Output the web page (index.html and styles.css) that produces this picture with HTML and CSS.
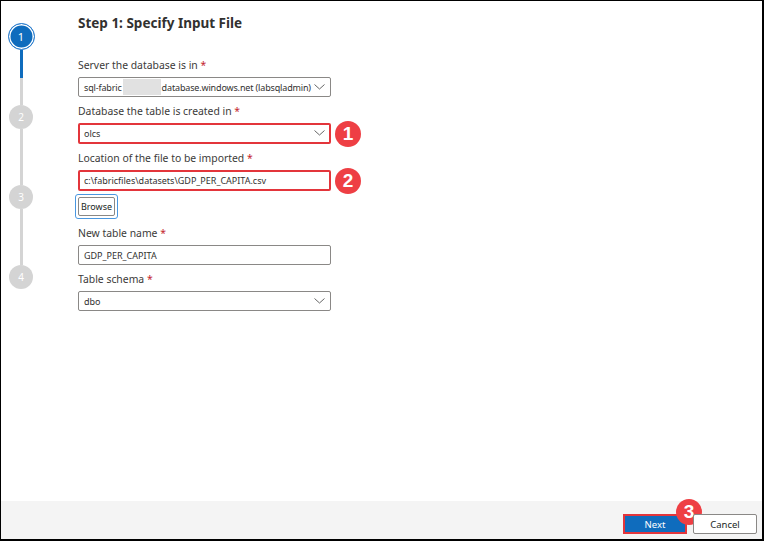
FILE: index.html
```html
<!DOCTYPE html>
<html>
<head>
<meta charset="utf-8">
<link rel="stylesheet" href="styles.css">
</head>
<body>
<div class="frame">
  <div class="main">
    <div class="stepper">
      <div class="step active">1</div>
      <div class="line first"></div>
      <div class="step">2</div>
      <div class="line"></div>
      <div class="step">3</div>
      <div class="line"></div>
      <div class="step">4</div>
    </div>
    <div class="content">
      <h1 class="title">Step 1: Specify Input File</h1>
      <div class="form">
        <div class="field">
          <label class="label">Server the database is in <span class="req">*</span></label>
          <div class="control select">
            <span class="val tight">sql-fabric<span class="redact"></span>database.windows.net (labsqladmin)</span>
            <svg class="chev" width="11" height="6" viewBox="0 0 11 6"><path d="M0.5 0.5 L5.5 5 L10.5 0.5" fill="none" stroke="#666" stroke-width="1"/></svg>
          </div>
        </div>
        <div class="field">
          <label class="label">Database the table is created in <span class="req">*</span></label>
          <div class="control select hl">
            <span class="val">olcs</span>
            <svg class="chev" width="11" height="6" viewBox="0 0 11 6"><path d="M0.5 0.5 L5.5 5 L10.5 0.5" fill="none" stroke="#666" stroke-width="1"/></svg>
            <span class="badge">1</span>
          </div>
        </div>
        <div class="field">
          <label class="label">Location of the file to be imported <span class="req">*</span></label>
          <div class="control hl">
            <span class="val">c:\fabricfiles\datasets\GDP_PER_CAPITA.csv</span>
            <span class="badge">2</span>
          </div>
          <div class="browse-wrap"><button class="browse">Browse</button></div>
        </div>
        <div class="field">
          <label class="label">New table name <span class="req">*</span></label>
          <div class="control">
            <span class="val">GDP_PER_CAPITA</span>
          </div>
        </div>
        <div class="field">
          <label class="label">Table schema <span class="req">*</span></label>
          <div class="control select">
            <span class="val">dbo</span>
            <svg class="chev" width="11" height="6" viewBox="0 0 11 6"><path d="M0.5 0.5 L5.5 5 L10.5 0.5" fill="none" stroke="#666" stroke-width="1"/></svg>
          </div>
        </div>
      </div>
    </div>
  </div>
  <div class="footer">
    <button class="btn primary">Next<span class="badge b3">3</span></button>
    <button class="btn">Cancel</button>
  </div>
</div>
</body>
</html>
```
FILE: styles.css
```css
* { box-sizing: border-box; }
html, body { margin: 0; padding: 0; background: #fff; }
body { font-family: "Noto Sans", "Open Sans", sans-serif; color: #323130; }

.frame {
  width: 764px;
  height: 541px;
  border-left: 1px solid #000;
  border-top: 1px solid #000;
  border-right: 2px solid #000;
  border-bottom: 2px solid #000;
  display: flex;
  flex-direction: column;
}

.main { flex: 1; display: flex; }

.stepper {
  width: 40px;
  padding-top: 22px;
  display: flex;
  flex-direction: column;
  align-items: center;
}
.step {
  width: 24px;
  height: 24px;
  border-radius: 50%;
  background: #d4d4d4;
  color: #fff;
  font-size: 10px;
  display: flex;
  align-items: center;
  justify-content: center;
  flex: none;
}
.step.active {
  width: 27px;
  height: 27px;
  background: #0f6cbd;
  border: 1.5px solid #2d7fd0;
  box-shadow: inset 0 0 0 1.5px #fff;
  font-size: 11px;
}
.line {
  width: 3px;
  height: 56px;
  background: #d4d4d4;
  flex: none;
}
.line.first {
  height: 55px;
  background: linear-gradient(#0f6cbd 0, #0f6cbd 28px, #d4d4d4 28px);
}

.content { padding-left: 37px; padding-top: 12px; }
.title {
  margin: 0;
  font-size: 13.5px;
  line-height: 20px;
  font-weight: 700;
  color: #323130;
}
.form { margin-top: 24px; display: flex; flex-direction: column; gap: 6px; }
.field { display: flex; flex-direction: column; width: 253px; }
.label {
  font-size: 10.4px;
  line-height: 16px;
  height: 16px;
  color: #3b3a39;
  margin-bottom: 4px;
}
.req { color: #c4262e; }

.control {
  position: relative;
  height: 20px;
  border: 1px solid #8a8886;
  border-radius: 2px;
  display: flex;
  align-items: center;
  padding: 0 5px;
  font-size: 9px;
  color: #323130;
  flex: none;
}
.control.hl { border: 2px solid #e3353b; padding-left: 4px; height: 21px; }
.val { white-space: nowrap; display: flex; align-items: center; }
.val.tight { letter-spacing: -0.15px; }
.redact {
  display: inline-block;
  width: 38px;
  height: 16px;
  margin: 0 1px 0 1px;
  background: #e1e1e1;
}
.chev { position: absolute; right: 5px; top: 6px; }
.hl .chev { right: 4px; top: 5px; }

.badge {
  position: absolute;
  left: 255px;
  top: -4px;
  width: 26px;
  height: 26px;
  border-radius: 50%;
  background: #ee3f44;
  color: #fff;
  font-family: "Liberation Sans", Arial, sans-serif;
  font-weight: 700;
  font-size: 19px;
  letter-spacing: 0;
  display: flex;
  align-items: center;
  justify-content: center;
}

.browse-wrap {
  margin-top: 3px;
  margin-left: -3px;
  width: 43px;
  height: 25px;
  border: 1px solid #4a97e0;
  border-radius: 3px;
  padding: 2px;
  display: flex;
  flex: none;
}
.browse {
  flex: 1;
  border: 1px solid #8a8886;
  border-radius: 2px;
  background: #fff;
  font-family: "Noto Sans", "Open Sans", sans-serif;
  font-size: 9px;
  line-height: 1;
  color: #201f1e;
  padding: 0;
}

.footer {
  height: 38px;
  background: #f4f4f4;
  display: flex;
  justify-content: flex-end;
  align-items: flex-end;
  gap: 6px;
  padding: 0 5px 5px 0;
}
.btn {
  position: relative;
  width: 64px;
  height: 20px;
  border: 1px solid #8a8886;
  border-radius: 2px;
  background: #fff;
  font-family: "Noto Sans", "Open Sans", sans-serif;
  font-size: 9.5px;
  color: #201f1e;
  padding: 0;
}
.btn.primary {
  background: #0f6cbd;
  color: #fff;
  border: 2px solid #e3353b;
  border-radius: 0;
}
.badge.b3 { left: 51px; top: -17px; }
```
